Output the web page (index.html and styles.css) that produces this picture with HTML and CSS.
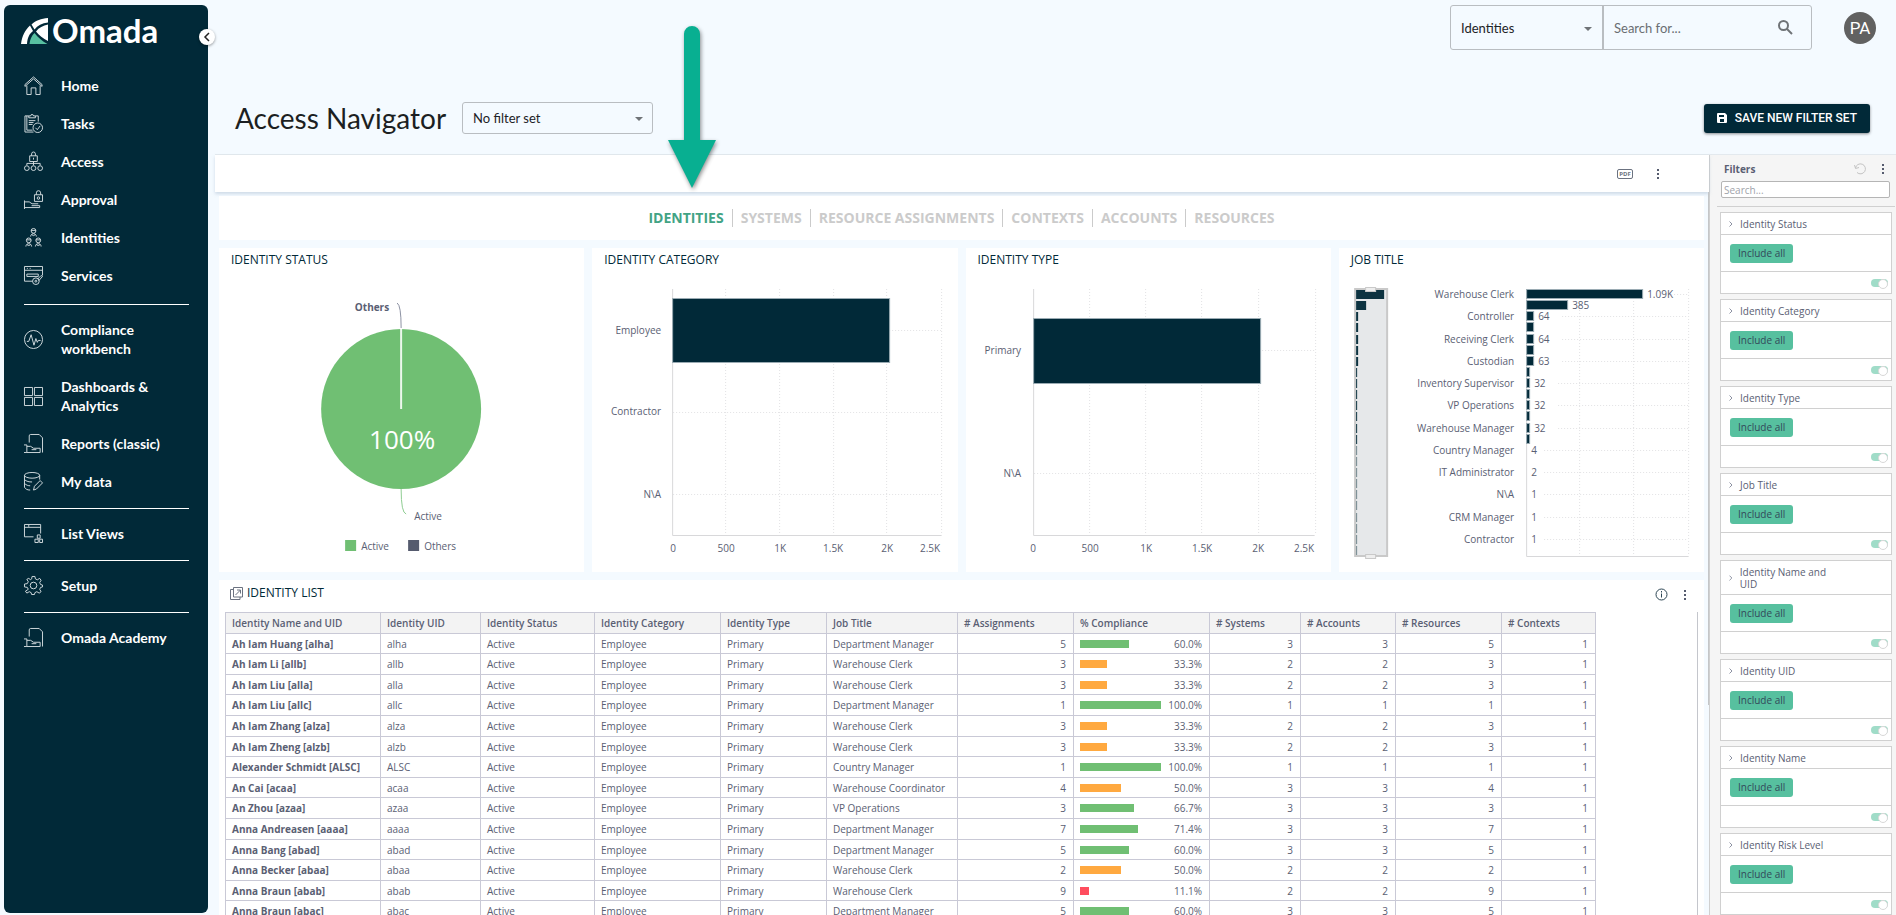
FILE: index.html
```html
<!DOCTYPE html>
<html lang="en">

<head>
    <meta charset="UTF-8">
    <meta name="viewport" content="width=device-width, initial-scale=1.0">
    <title>Access Navigator</title>
    <link rel="stylesheet" href="styles.css">
</head>

<body>
    <div class="app">

        <aside class="sidebar">
            <div class="logo">
                <svg width="27" height="26" viewBox="0 0 27 26">
                    <path fill="#fff" d="M0 26C1 18 4 12 9 7.500L12 13C8 16 6.500 20 6 26zM10.500 6.500C15 2.500 20 .500 27 0V4.500C21 5 16.500 7.500 13.500 11.500zM27 6.500V23C22 20.500 18 17.500 15 13.500C18 9.500 22 7.500 27 6.500z" />
                    <path fill="#58c0a1" d="M8.500 26C9 21.500 10.500 18 13.500 15C17 19.500 21 23 26.500 26z" />
                </svg>
                <span class="logo-name">Omada</span>
            </div>
            <button class="collapse" aria-label="Collapse menu">
                <svg width="8" height="10" viewBox="0 0 8 10"><path d="M6 1L2 5l4 4" /></svg>
            </button>

            <nav class="menu">
                <a class="menu-item" href="#">
                    <svg viewBox="0 0 20 20"><path d="M1 9l9-8 9 8M1 9v2l9-8 9 8V9M3 10v9.500h4.500v-7h5v7H17V10" /></svg>
                    <span>Home</span>
                </a>
                <a class="menu-item" href="#">
                    <svg viewBox="0 0 20 20"><path d="M5 2H1v17h9M15 2h-3M15 2v6M3 2v15h6M5 4h7V2h-2a1.500 1.500 0 0 0-3 0H5zM5 7h7M5 9h5M5 11h4" /><circle cx="14.500" cy="14.500" r="5" /><path d="M12 14.500l2 2 3-4" /></svg>
                    <span>Tasks</span>
                </a>
                <a class="menu-item" href="#">
                    <svg viewBox="0 0 20 20"><path d="M6 4h8v6H6zM8 4V2a2 2 0 0 1 4 0v2M10 6v2M10 10v4M3 14v-2h14v2" /><circle cx="3" cy="17" r="2.500" /><circle cx="10" cy="17" r="2.500" /><circle cx="17" cy="17" r="2.500" /></svg>
                    <span>Access</span>
                </a>
                <a class="menu-item" href="#">
                    <svg viewBox="0 0 20 20"><path d="M11 5h8.500v7H11zM13 5V3a2 2 0 0 1 4.500 0v2M.500 11v9M.500 12.500h5l3 2h6.500M.500 18.500h16v-2H8" /><circle cx="15.200" cy="8.500" r="1.300" /></svg>
                    <span>Approval</span>
                </a>
                <a class="menu-item" href="#">
                    <svg viewBox="0 0 20 20"><circle cx="10" cy="3" r="2.500" /><circle cx="5" cy="13" r="2.500" /><circle cx="15" cy="13" r="2.500" /><path d="M7.500 2.500h5M2.500 12.500h5M12.500 12.500h5M7 9c0-4 6-4 6 0M8 7l2 1 2-1M2 19.500c0-4 6-4 6 0M12 19.500c0-4 6-4 6 0M3 17.500l2 1 2-1M13 17.500l2 1 2-1" /></svg>
                    <span>Identities</span>
                </a>
                <a class="menu-item" href="#">
                    <svg viewBox="0 0 20 20"><path d="M9 16H.500V.500h19V10M.500 4.500h19M3 2.500h1M6 2.500h1M3 8.500h12v2.500H3zM14 14l4-4 1.500 1-4 4.500" /><circle cx="12.500" cy="16" r="3.500" /><circle cx="12.500" cy="16" r="1" /></svg>
                    <span>Services</span>
                </a>
                <hr>
                <a class="menu-item" href="#">
                    <svg viewBox="0 0 20 20"><circle cx="10" cy="10" r="9.500" /><path d="M3 12h2l2.500-7 3 11 2-7 1.500 4 1-2h2.500" /></svg>
                    <span>Compliance workbench</span>
                </a>
                <a class="menu-item" href="#">
                    <svg viewBox="0 0 20 20"><path d="M.500.500h8.500v8.500H.500zM11 .500h8.500v8.500H11zM.500 11h8.500v8.500H.500zM11 11h8.500v8.500H11z" /></svg>
                    <span>Dashboards &amp; Analytics</span>
                </a>
                <a class="menu-item" href="#">
                    <svg viewBox="0 0 20 20"><path d="M5.500 9V2a1.500 1.500 0 0 1 1.500-1.500h9l3.500 3.500v15.500M0 11.500h3v8H0M3 13h4l3 2h7v4.500H3M8 16.500h5" /></svg>
                    <span>Reports (classic)</span>
                </a>
                <a class="menu-item" href="#">
                    <svg viewBox="0 0 20 20"><ellipse cx="8.500" cy="3.500" rx="8" ry="3" /><path d="M.500 3.500V16c1 2 3 3 6 3M16.500 3.500V8M.500 8c2 2 5 2.500 8 2.500M.500 12c2 2 4 2.500 6 2.500M10 19l1-4 6-6 2.500 2.500-6.500 6.500z" /></svg>
                    <span>My data</span>
                </a>
                <hr>
                <a class="menu-item" href="#">
                    <svg viewBox="0 0 20 20"><path d="M10 13.500H.500V.500h17V10M.500 3.500h17M5 1v2M14 11.500h3v3.500h-3zM11.500 16h3.500v3.500h-3.500zM16.500 16h3v3.500h-3z" /></svg>
                    <span>List Views</span>
                </a>
                <hr>
                <a class="menu-item" href="#">
                    <svg viewBox="0 0 20 20"><circle cx="10" cy="10" r="3.500" /><path d="M8.500.500h3l.500 2.500 2 1 2.500-1.500 1.500 2-1.500 2.500 1 2 2 .500v2l-2 .500-1 2 1.500 2.500-2 1.500-2.500-1.500-2 1-.500 2h-3l-.500-2-2-1-2.500 1.500-1.500-2L4.500 14l-1-2-3-.500v-3L3.500 8l1-2L3 3.500 5 2.500 7 4l1-1z" /></svg>
                    <span>Setup</span>
                </a>
                <hr>
                <a class="menu-item" href="#">
                    <svg viewBox="0 0 20 20"><path d="M5.500 9V2a1.500 1.500 0 0 1 1.500-1.500h9l3.500 3.500v15.500M0 11.500h3v8H0M3 13h4l3 2h7v4.500H3M8 16.500h5" /></svg>
                    <span>Omada Academy</span>
                </a>
            </nav>
        </aside>

        <main class="main">
            <header class="topbar">
                <form class="search-group">
                    <div class="select-wrap">
                        <select class="scope" aria-label="Search scope"><option>Identities</option></select>
                        <svg class="caret" width="8" height="4" viewBox="0 0 8 4"><path d="M0 0h8L4 4z" /></svg>
                    </div>
                    <input class="search-text" type="text" placeholder="Search for..." aria-label="Search for">
                    <button class="icon-btn" type="button" aria-label="Search">
                        <svg width="15" height="15" viewBox="0 0 15 15" fill="none" stroke="#6f7377" stroke-width="2"><circle cx="5.500" cy="5.500" r="4.500" /><path d="M9 9l5 5" /></svg>
                    </button>
                </form>
                <div class="avatar">PA</div>
            </header>

            <div class="title-row">
                <h1>Access Navigator</h1>
                <div class="select-wrap">
                    <select class="filter-set" aria-label="Filter set"><option>No filter set</option></select>
                    <svg class="caret" width="8" height="4" viewBox="0 0 8 4"><path d="M0 0h8L4 4z" /></svg>
                </div>
                <button class="save-btn">
                    <svg width="10" height="10" viewBox="0 0 10 10"><path fill="#fff" fill-rule="evenodd" d="M1 0h7l2 2v7a1 1 0 0 1-1 1H1a1 1 0 0 1-1-1V1a1 1 0 0 1 1-1zM2 2v2h5V2zM3 6v3h4V6z" /></svg>
                    SAVE NEW FILTER SET
                </button>
            </div>

            <div class="content">
                <section class="dashboard">
                    <div class="toolbar">
                        <button class="icon-btn pdf" aria-label="Export PDF">PDF</button>
                        <button class="icon-btn" aria-label="More">
                            <svg class="dots" width="4" height="12" viewBox="0 0 4 12"><path d="M1 1h2v2H1zM1 5h2v2H1zM1 9h2v2H1z" /></svg>
                        </button>
                    </div>

                    <div class="widgets">
                        <nav class="tabs">
                            <a class="active" href="#">IDENTITIES</a>
                            <a href="#">SYSTEMS</a>
                            <a href="#">RESOURCE ASSIGNMENTS</a>
                            <a href="#">CONTEXTS</a>
                            <a href="#">ACCOUNTS</a>
                            <a href="#">RESOURCES</a>
                        </nav>

                        <div class="charts">
                            <div class="card">
                                <h2>IDENTITY STATUS</h2>
                                <svg class="chart" viewBox="0 0 365 302">
                                    <circle cx="182" cy="139" r="80" fill="#70bf73" />
                                    <path d="M182 59v80" stroke="#edf7ee" stroke-width="2" />
                                    <path d="M178 33q4 2 4 25" fill="none" stroke="#8d92a3" />
                                    <path d="M182 219q0 24 5 25" fill="none" stroke="#8fcd92" />
                                    <text class="bold" x="170" y="41" text-anchor="end">Others</text>
                                    <text x="195" y="250">Active</text>
                                    <text class="pie-value" x="183" y="179" text-anchor="middle">100%</text>
                                    <rect x="126" y="270" width="11" height="11" fill="#70bf73" />
                                    <text x="142" y="280">Active</text>
                                    <rect x="189" y="270" width="11" height="11" fill="#555b6e" />
                                    <text x="205" y="280">Others</text>
                                </svg>
                            </div>

                            <div class="card">
                                <h2>IDENTITY CATEGORY</h2>
                                <svg class="chart" viewBox="0 0 365 302">
                                    <path class="grid" d="M133.500 19v246M187.500 19v246M241.500 19v246M294.500 19v246M349.500 19v246M81 60.500h268M81 142.500h268M81 224.500h268" />
                                    <path class="axis" d="M80.500 19v246.500h269" />
                                    <rect class="bar" x="80.500" y="28.500" width="217" height="64" />
                                    <g text-anchor="end">
                                        <text x="69" y="64">Employee</text>
                                        <text x="69" y="145">Contractor</text>
                                        <text x="69" y="228">N\A</text>
                                        <text x="348" y="282">2.5K</text>
                                    </g>
                                    <g text-anchor="middle">
                                        <text x="81" y="282">0</text>
                                        <text x="134" y="282">500</text>
                                        <text x="188" y="282">1K</text>
                                        <text x="241" y="282">1.5K</text>
                                        <text x="295" y="282">2K</text>
                                    </g>
                                </svg>
                            </div>

                            <div class="card">
                                <h2>IDENTITY TYPE</h2>
                                <svg class="chart" viewBox="0 0 365 302">
                                    <path class="grid" d="M123.500 19v246M179.500 19v246M235.500 19v246M292.500 19v246M349.500 19v246M68 80.500h281M68 203.500h281" />
                                    <path class="axis" d="M67.500 19v246.500h281" />
                                    <rect class="bar" x="67.500" y="48.500" width="227" height="65" />
                                    <g text-anchor="end">
                                        <text x="55" y="84">Primary</text>
                                        <text x="55" y="207">N\A</text>
                                        <text x="348" y="282">2.5K</text>
                                    </g>
                                    <g text-anchor="middle">
                                        <text x="67" y="282">0</text>
                                        <text x="124" y="282">500</text>
                                        <text x="180" y="282">1K</text>
                                        <text x="236" y="282">1.5K</text>
                                        <text x="292" y="282">2K</text>
                                    </g>
                                </svg>
                            </div>

                            <div class="card">
                                <h2>JOB TITLE</h2>
                                <svg class="chart" viewBox="0 0 365 302">
                                    <rect x="16" y="19" width="32" height="267" fill="#e6e8ea" stroke="#c9c9c9" stroke-width="2" />
                                    <path class="grid" d="M240.500 19v267M294.500 19v267M349.500 19v267" />
                                    <path class="axis" d="M187.500 19v267.500h162" />
                                    <g id="jobs"></g>
                                    <g fill="#eee" stroke="#c9c9c9">
                                        <rect x="26.500" y="17.500" width="10" height="4" />
                                        <rect x="26.500" y="284.500" width="10" height="4" />
                                    </g>
                                </svg>
                            </div>
                        </div>

                        <div class="card list-card">
                            <div class="list-head">
                                <svg width="13" height="13" viewBox="0 0 13 13" fill="none" stroke="#6b7280"><path d="M3.500.500h9v9.500h-9zM3 2.500H.500v10H10V10M5.500 8l5-5M7 3h3.500v3.500" /></svg>
                                <h2>IDENTITY LIST</h2>
                                <button class="icon-btn" aria-label="Info">
                                    <svg width="13" height="13" viewBox="0 0 13 13" fill="none" stroke="#2d4654"><circle cx="6.500" cy="6.500" r="5.500" /><path d="M6.500 3v1.500M6.500 5.500v4" /></svg>
                                </button>
                                <button class="icon-btn" aria-label="More">
                                    <svg class="dots" width="4" height="12" viewBox="0 0 4 12"><path d="M1 1h2v2H1zM1 5h2v2H1zM1 9h2v2H1z" /></svg>
                                </button>
                            </div>
                            <div class="table-wrap">
                                <table>
                                    <colgroup>
                                        <col class="w-name"><col class="w-uid"><col class="w-status"><col class="w-category"><col class="w-type"><col class="w-job"><col class="w-assign"><col class="w-comp"><col class="w-sys"><col class="w-acc"><col class="w-res"><col class="w-ctx">
                                    </colgroup>
                                    <thead>
                                        <tr>
                                            <th>Identity Name and UID</th>
                                            <th>Identity UID</th>
                                            <th>Identity Status</th>
                                            <th>Identity Category</th>
                                            <th>Identity Type</th>
                                            <th>Job Title</th>
                                            <th># Assignments</th>
                                            <th>% Compliance</th>
                                            <th># Systems</th>
                                            <th># Accounts</th>
                                            <th># Resources</th>
                                            <th># Contexts</th>
                                        </tr>
                                    </thead>
                                    <tbody id="identities"></tbody>
                                </table>
                            </div>
                        </div>
                    </div>
                    <div class="scroll-thumb"></div>
                </section>

                <aside class="filters">
                    <div class="filters-head">
                        <h3>Filters</h3>
                        <button class="icon-btn" aria-label="Reset filters">
                            <svg width="12" height="12" viewBox="0 0 12 12" fill="none" stroke="#c3c3c3"><path d="M1.500 5a5 5 0 1 1 1.500 4.500M.500 2l1 3.500L5 4.500" /></svg>
                        </button>
                        <button class="icon-btn" aria-label="Filter options">
                            <svg class="dots" width="4" height="12" viewBox="0 0 4 12"><path d="M1 1h2v2H1zM1 5h2v2H1zM1 9h2v2H1z" /></svg>
                        </button>
                    </div>
                    <input class="filter-search" type="text" placeholder="Search..." aria-label="Search filters">
                    <div class="filter-list" id="filters"></div>
                </aside>
            </div>
        </main>

        <svg class="arrow" width="48" height="162" viewBox="0 0 48 162"><path fill="#08af91" d="M16 8a8 8 0 0 1 16 0v106h16L24 162 0 114h16z" /></svg>
    </div>

    <script>
        const people = [
            ['Ah Iam Huang [alha]', 'alha', 'Department Manager', 5, 60.0, 3, 3, 5],
            ['Ah Iam Li [allb]', 'allb', 'Warehouse Clerk', 3, 33.3, 2, 2, 3],
            ['Ah Iam Liu [alla]', 'alla', 'Warehouse Clerk', 3, 33.3, 2, 2, 3],
            ['Ah Iam Liu [allc]', 'allc', 'Department Manager', 1, 100.0, 1, 1, 1],
            ['Ah Iam Zhang [alza]', 'alza', 'Warehouse Clerk', 3, 33.3, 2, 2, 3],
            ['Ah Iam Zheng [alzb]', 'alzb', 'Warehouse Clerk', 3, 33.3, 2, 2, 3],
            ['Alexander Schmidt [ALSC]', 'ALSC', 'Country Manager', 1, 100.0, 1, 1, 1],
            ['An Cai [acaa]', 'acaa', 'Warehouse Coordinator', 4, 50.0, 3, 3, 4],
            ['An Zhou [azaa]', 'azaa', 'VP Operations', 3, 66.7, 3, 3, 3],
            ['Anna Andreasen [aaaa]', 'aaaa', 'Department Manager', 7, 71.4, 3, 3, 7],
            ['Anna Bang [abad]', 'abad', 'Department Manager', 5, 60.0, 3, 3, 5],
            ['Anna Becker [abaa]', 'abaa', 'Warehouse Clerk', 2, 50.0, 2, 2, 2],
            ['Anna Braun [abab]', 'abab', 'Warehouse Clerk', 9, 11.1, 2, 2, 9],
            ['Anna Braun [abac]', 'abac', 'Department Manager', 5, 60.0, 3, 3, 5]
        ];

        function level(pct) {
            if (pct >= 60) return 'good';
            return pct >= 30 ? 'fair' : 'poor';
        }

        document.getElementById('identities').innerHTML = people.map(p => `
            <tr>
                <th>${p[0]}</th><td>${p[1]}</td><td>Active</td><td>Employee</td><td>Primary</td><td>${p[2]}</td>
                <td class="num">${p[3]}</td>
                <td><div class="compliance"><div class="track"><div class="fill ${level(p[4])}" style="width: ${p[4]}%"></div></div><span>${p[4].toFixed(1)}%</span></div></td>
                <td class="num">${p[5]}</td><td class="num">${p[6]}</td><td class="num">${p[7]}</td><td class="num">1</td>
            </tr>`).join('');

        const filterNames = ['Identity Status', 'Identity Category', 'Identity Type', 'Job Title',
            'Identity Name and UID', 'Identity UID', 'Identity Name', 'Identity Risk Level'];

        document.getElementById('filters').innerHTML = filterNames.map(name => `
            <div class="filter">
                <div class="filter-name"><svg width="4" height="6" viewBox="0 0 4 6"><path d="M.5.5L3 3 .5 5.500" /></svg><span>${name}</span></div>
                <div class="filter-body"><button class="include">Include all</button></div>
                <div class="filter-foot"><input class="toggle" type="checkbox" checked aria-label="${name} on"></div>
            </div>`).join('');

        // every second category on the axis gets a label
        const jobs = [[1090, 'Warehouse Clerk', '1.09K'], [385, '', '385'], [64, 'Controller', '64'], [64], [64, 'Receiving Clerk', '64'], [64],
            [63, 'Custodian', '63'], [32], [32, 'Inventory Supervisor', '32'], [32], [32, 'VP Operations', '32'], [32],
            [32, 'Warehouse Manager', '32'], [32], [4, 'Country Manager', '4'], [4], [2, 'IT Administrator', '2'], [2],
            [1, 'N\\A', '1'], [1], [1, 'CRM Manager', '1'], [1], [1, 'Contractor', '1'], [1]];

        document.getElementById('jobs').innerHTML = jobs.map((j, i) => {
            const y = Math.round(24 + i * 11.13);
            const w = Math.round(j[0] * 116 / 1090);
            let out = `<rect class="mini" x="17" y="${y - 4}" width="${Math.max(1, Math.round(j[0] * 28 / 1090))}" height="9" opacity="${j[0] < 5 ? 0.5 : 0.95}" />`;
            if (j[1]) {
                out += `<text x="175" y="${y + 4}" text-anchor="end">${j[1]}</text>`;
                out += `<path class="grid" d="M${w > 1 ? w + 216 : 205} ${y + 0.5}H349" />`;
            }
            if (w > 1) out += `<rect class="bar" x="187.5" y="${y - 4.5}" width="${w}" height="9" />`;
            if (j[2]) out += `<text x="${192 + w}" y="${y + 4}">${j[2]}</text>`;
            return out;
        }).join('');
    </script>

</body>

</html>
```
FILE: styles.css
```css
* {
    box-sizing: border-box;
}

body {
    margin: 0;
    background: #f4faff;
    color: #5a6073;
    font-family: 'Open Sans', sans-serif;
    font-size: 10px;
}

h1, h2, h3 {
    margin: 0;
    font-weight: 400;
}

a {
    color: inherit;
    text-decoration: none;
}

button, input, select {
    font-family: inherit;
    margin: 0;
}

.app {
    display: flex;
    height: 100vh;
    overflow: hidden;
    position: relative;
}

/* sidebar */
.sidebar {
    flex: none;
    width: 204px;
    margin: 5px 7px 2px 4px;
    border-radius: 6px;
    background: #012938;
    color: #fff;
    font-family: Lato, sans-serif;
    position: relative;
}

.logo {
    display: flex;
    align-items: flex-end;
    gap: 4px;
    height: 39px;
    padding-left: 17px;
}

.logo-name {
    font-size: 33px;
    line-height: 28px;
    font-weight: 700;
}

.collapse {
    position: absolute;
    top: 24px;
    right: -7px;
    display: flex;
    align-items: center;
    justify-content: center;
    width: 16px;
    height: 16px;
    padding: 0;
    border: 0;
    border-radius: 50%;
    background: #fff;
    box-shadow: 0 1px 3px rgba(0, 0, 0, 0.4);
}

.collapse path {
    fill: none;
    stroke: #222;
    stroke-width: 1.5;
}

.menu {
    padding: 23px 19px 0 20px;
}

.menu-item {
    display: flex;
    align-items: center;
    gap: 18px;
    padding: 9px 0 10px;
    font-size: 14px;
    line-height: 19px;
    font-weight: 700;
}

.menu-item svg {
    flex: none;
    width: 19px;
    height: 19px;
    overflow: visible;
    fill: none;
    stroke: #d5dde0;
}

.menu-item span {
    max-width: 108px;
}

.menu hr {
    margin: 7px 0 6px;
    border: 0;
    border-top: 1px solid #fff;
}

.menu-item:nth-child(6) {
    margin-bottom: 9px;
}

/* header */
.main {
    flex: 1;
    min-width: 0;
    display: flex;
    flex-direction: column;
}

.topbar {
    display: flex;
    justify-content: flex-end;
    align-items: center;
    gap: 32px;
    padding: 5px 20px 0 0;
}

.search-group {
    display: flex;
    align-items: center;
    width: 362px;
    height: 45px;
    border: 1px solid #b9bdc1;
    border-radius: 3px;
    font-family: Lato, sans-serif;
}

.select-wrap {
    position: relative;
    font-family: Lato, sans-serif;
}

.search-group .select-wrap {
    width: 153px;
    height: 43px;
    border-right: 2px solid #b9bdc1;
}

select {
    appearance: none;
    width: 100%;
    height: 100%;
    padding: 0 10px;
    border: 0;
    background: none;
    color: #1d2226;
    font-size: 13px;
}

.caret {
    position: absolute;
    right: 10px;
    top: 50%;
    margin-top: -1px;
    fill: #6f7377;
}

.search-text {
    flex: 1;
    min-width: 0;
    padding: 0 10px;
    border: 0;
    background: none;
    font-size: 13px;
}

.search-text::placeholder {
    color: #6a6e72;
}

.search-group .icon-btn {
    margin-right: 18px;
}

.icon-btn {
    display: flex;
    padding: 0;
    border: 0;
    background: none;
}

.dots {
    fill: #555b6e;
}

.avatar {
    width: 32px;
    height: 32px;
    border-radius: 50%;
    background: #616161;
    color: #fff;
    font-family: Roboto, sans-serif;
    font-size: 17px;
    line-height: 32px;
    text-align: center;
}

.title-row {
    display: flex;
    align-items: center;
    padding: 52px 26px 20px 20px;
}

h1 {
    color: #1c1f22;
    font-family: Lato, sans-serif;
    font-size: 28px;
    line-height: 32px;
}

.title-row .select-wrap {
    width: 191px;
    height: 32px;
    margin-left: 16px;
}

.filter-set {
    border: 1px solid #b9bdc1;
    border-radius: 3px;
}

.save-btn {
    display: flex;
    align-items: center;
    gap: 8px;
    height: 29px;
    margin-left: auto;
    padding: 0 13px;
    border: 0;
    border-radius: 3px;
    background: #012938;
    color: #fff;
    font-family: Roboto, sans-serif;
    font-size: 12px;
    font-weight: 500;
    box-shadow: 0 1px 3px rgba(0, 0, 0, 0.45);
}

/* dashboard */
.content {
    flex: 1;
    min-height: 0;
    display: flex;
    border-top: 1px solid #e3e9ee;
}

.dashboard {
    flex: 1;
    min-width: 0;
    display: flex;
    flex-direction: column;
    position: relative;
}

.toolbar {
    display: flex;
    align-items: center;
    justify-content: flex-end;
    gap: 23px;
    height: 37px;
    padding: 0 49px 0 0;
    background: #fff;
    box-shadow: 0 2px 3px rgba(170, 190, 210, 0.5);
}

.pdf {
    width: 16px;
    height: 10px;
    border: 1px solid #6b7280;
    border-radius: 2px;
    justify-content: center;
    color: #6b7280;
    font-size: 6px;
    line-height: 8px;
    font-weight: 700;
}

.widgets {
    flex: 1;
    min-height: 0;
    display: flex;
    flex-direction: column;
    gap: 8px;
    padding: 4px 5px 0 4px;
}

.tabs {
    flex: none;
    display: flex;
    align-items: center;
    justify-content: center;
    height: 44px;
    background: #fff;
    color: #cbcbcb;
    font-size: 14px;
    line-height: 18px;
    font-weight: 700;
}

.tabs a {
    padding: 0 8px;
}

.tabs a + a {
    border-left: 1px solid #cbcbcb;
}

.tabs .active {
    color: #42a385;
}

.charts {
    flex: none;
    display: grid;
    grid-template-columns: repeat(4, 1fr);
    gap: 8px;
}

.card {
    background: #fff;
    min-width: 0;
}

h2 {
    padding: 2px 12px 0;
    color: #012938;
    font-size: 12px;
    line-height: 20px;
}

.chart {
    display: block;
    width: 100%;
    height: 302px;
}

.chart text {
    fill: #5a6073;
}

.chart .bold {
    font-weight: 700;
}

.chart .pie-value {
    fill: #fff;
    font-size: 26px;
}

.grid {
    fill: none;
    stroke: #e2e2e4;
    stroke-dasharray: 1 2;
}

.axis {
    fill: none;
    stroke: #d8d8da;
}

.bar {
    fill: #012938;
    stroke: #9aabb3;
}

.mini {
    fill: #012938;
}

/* identity list */
.list-card {
    flex: 1;
    min-height: 0;
    display: flex;
    flex-direction: column;
}

.list-head {
    flex: none;
    display: flex;
    align-items: center;
    height: 32px;
    padding: 0 17px 6px 11px;
}

.list-head h2 {
    margin-right: auto;
    padding: 0 4px;
}

.list-head .icon-btn {
    margin: 3px 0 0 15px;
}

.table-wrap {
    flex: 1;
    min-height: 0;
    margin: 0 6px;
    border-right: 1px solid #c4c6cc;
    overflow: hidden;
}

table {
    table-layout: fixed;
    width: 1370px;
    border-collapse: collapse;
}

th, td {
    height: 21px;
    padding: 0 7px 0 6px;
    border: 1px solid #c9c9d6;
    line-height: 14px;
    text-align: left;
    white-space: nowrap;
}

th {
    font-weight: 700;
}

thead th {
    background: #f3f3f3;
    font-weight: 600;
}

tbody tr:nth-child(5n+1) > *,
tbody tr:nth-child(5n+3) > * {
    height: 20px;
}

.num {
    text-align: right;
}

.w-name { width: 155px; }
.w-uid { width: 100px; }
.w-status { width: 114px; }
.w-category { width: 126px; }
.w-type { width: 106px; }
.w-job { width: 131px; }
.w-assign { width: 116px; }
.w-comp { width: 136px; }
.w-sys { width: 91px; }
.w-acc { width: 95px; }
.w-res { width: 106px; }
.w-ctx { width: 94px; }

.compliance {
    display: flex;
    align-items: center;
    justify-content: space-between;
}

.track {
    width: 81px;
}

.fill {
    height: 8px;
}

.good {
    background: #70bf73;
}

.fair {
    background: #ffa940;
}

.poor {
    background: #ff4d5e;
}

.scroll-thumb {
    position: absolute;
    top: 37px;
    right: 0;
    width: 1px;
    height: 513px;
    background: #c4c6c8;
}

/* filters */
.filters {
    flex: none;
    width: 187px;
    border-left: 1px solid #d0d0d0;
    background: #f5f5f5;
    overflow: hidden;
}

.filters-head {
    display: flex;
    align-items: center;
    gap: 15px;
    height: 26px;
    padding: 2px 11px 0 14px;
}

h3 {
    margin-right: auto;
    font-size: 10px;
    font-weight: 700;
}

.filter-search {
    display: block;
    width: 169px;
    height: 17px;
    margin-left: 11px;
    padding: 0 2px;
    border: 1px solid #b5b5b5;
    border-radius: 2px;
    background: #fff;
    font-size: 10px;
}

.filter-search::placeholder {
    color: #a0a3aa;
}

.filter-list {
    display: flex;
    flex-direction: column;
    gap: 5px;
    margin: 8px 1px 0 7px;
    padding: 5px 3px 0;
    border-top: 1px solid #d0d0d0;
}

.filter {
    flex: none;
    border: 1px solid #d0d0d0;
    background: #fff;
}

.filter-name {
    display: flex;
    align-items: center;
    gap: 7px;
    padding: 5px 50px 4px 8px;
    line-height: 12px;
}

.filter-name path {
    fill: none;
    stroke: #8d92a3;
}

.filter-body {
    display: flex;
    align-items: center;
    height: 38px;
    padding-left: 9px;
    border: solid #d0d0d0;
    border-width: 1px 0;
}

.include {
    height: 19px;
    padding: 0 8px;
    border: 0;
    border-radius: 3px;
    background: #57c09f;
    color: #33485a;
    font-size: 10px;
    line-height: 19px;
}

.filter-foot {
    display: flex;
    align-items: center;
    justify-content: flex-end;
    height: 21px;
    padding-right: 3px;
}

.toggle {
    appearance: none;
    position: relative;
    width: 17px;
    height: 8px;
    border-radius: 4px;
    background: #a0dcc8;
}

.toggle::after {
    content: '';
    position: absolute;
    top: 0;
    right: 0;
    width: 8px;
    height: 8px;
    border-radius: 50%;
    background: #fff;
    border: 1px solid #d8d8d8;
}

/* pointer to the Identities tab */
.arrow {
    position: absolute;
    left: 668px;
    top: 26px;
    overflow: visible;
    filter: drop-shadow(1px 2px 2px rgba(0, 0, 0, 0.45));
}
```
